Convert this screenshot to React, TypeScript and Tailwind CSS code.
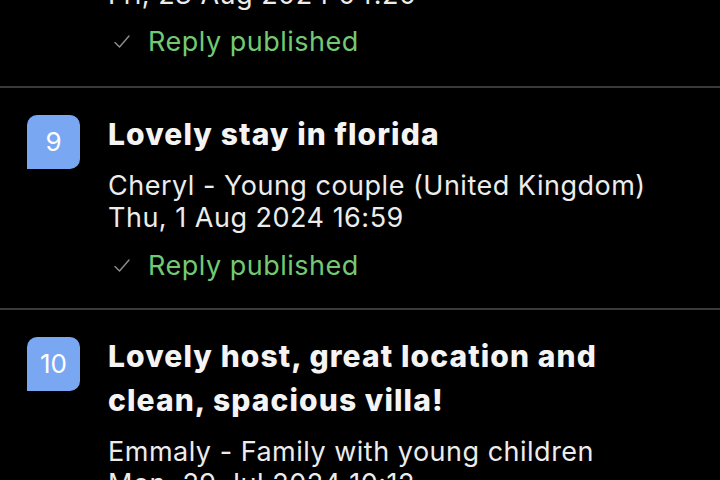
type Review = {
  n: number;
  title: string;
  guest: string;
  date: string;
  published: boolean;
};

const reviews: Review[] = [
  {
    n: 9,
    title: "Lovely stay in florida",
    guest: "Cheryl - Young couple (United Kingdom)",
    date: "Thu, 1 Aug 2024 16:59",
    published: true,
  },
  {
    n: 10,
    title: "Lovely host, great location and clean, spacious villa!",
    guest: "Emmaly - Family with young children",
    date: "Mon, 29 Jul 2024 10:12",
    published: true,
  },
];

function Check() {
  return (
    <svg width="18" height="16" viewBox="0 0 18 16" fill="none" className="shrink-0">
      <path d="M2 8.5 L6.5 13 L16 2" stroke="#8e8e93" strokeWidth="1.4" strokeLinecap="round" strokeLinejoin="round" />
    </svg>
  );
}

function Published({ top }: { top: string }) {
  return (
    <div className={`flex items-center gap-[17px] pl-[5px] h-[32px] ${top}`}>
      <Check />
      <span className="text-[27px] tracking-[0.5px] text-[#74c874] leading-[32px]">Reply published</span>
    </div>
  );
}

function Row({ r }: { r: Review }) {
  return (
    <div className="flex gap-[28px] pl-[27px] pr-[20px] pt-[24px] pb-[26px]">
      <div className="w-[53px] h-[54px] mt-[3px] shrink-0 bg-[#79a7f2] rounded-tl-[10px] rounded-tr-[10px] rounded-br-[10px] flex items-center justify-center text-white text-[26px] pb-[2px]">
        {r.n}
      </div>
      <div className="flex flex-col min-w-0 w-[540px]">
        <div className="text-[30px] font-extrabold tracking-[1.1px] leading-[44px] text-[#f4f4f4]">{r.title}</div>
        <div className="mt-[14px] text-[27px] tracking-[0.5px] leading-[32px] text-[#ececec]">
          <div>{r.guest}</div>
          <div>{r.date}</div>
        </div>
        {r.published && <Published top="mt-[16px]" />}
      </div>
    </div>
  );
}

export default function App() {
  return (
    <div className="w-[720px] h-[480px] overflow-hidden bg-black font-['Inter',sans-serif]">
      <div className="pl-[108px] -mt-[21px] pb-[28px]">
        <div className="text-[27px] tracking-[0.5px] leading-[32px] text-[#ececec]">Fri, 23 Aug 2024 04:20</div>
        <Published top="mt-[15px]" />
      </div>
      {reviews.map((r) => (
        <div key={r.n}>
          <div className="h-[2px] bg-[#3a3a3c]" />
          <Row r={r} />
        </div>
      ))}
    </div>
  );
}
